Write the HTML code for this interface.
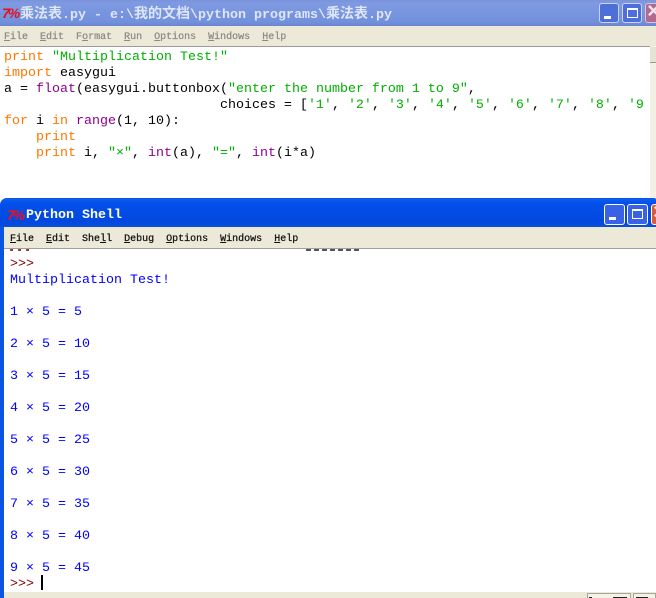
<!DOCTYPE html>
<html>
<head>
<meta charset="utf-8">
<style>
html,body{margin:0;padding:0;background:#fff}
#p{position:relative;width:656px;height:598px;overflow:hidden;background:#fff}
.a{position:absolute}
.m{font-family:"Liberation Mono","Noto Sans CJK SC",monospace;white-space:pre}
.c{font-size:13.33px;line-height:16px;left:4px}
.o{color:#ff7700}.g{color:#00b000}.k{color:#000}.f{color:#900090}
.s{font-size:13.33px;line-height:16px;left:10px;color:#0000ff}
.n{font-size:10px;line-height:14px;-webkit-text-stroke:.25px currentColor}
.n u{text-underline-offset:1px}
.b{box-sizing:border-box;border:1px solid #fff;border-radius:3px;overflow:hidden}
.l{font:italic bold 14px/16px "Liberation Sans",sans-serif;letter-spacing:-2px}
.t span{font-size:14px}
</style>
</head>
<body>
<div id="p">
<!-- Editor window -->
<div class="a" style="left:0;top:0;width:656px;height:26px;background:linear-gradient(#7b93d8,#7e9ae2 12%,#7290dc 85%,#6c86cf)"></div>
<div class="a m l" style="left:2px;top:5px;color:#e8101a">7%</div>
<div class="a m t" style="left:20px;top:7px;font-size:13.33px;line-height:16px;font-weight:bold;color:#dfe6f6"><span>乘法表</span>.py - e:\<span>我的文档</span>\python programs\<span>乘法表</span>.py</div>
<div class="a b" style="left:599px;top:3px;width:20px;height:20px;background:#4f6fd8;border-color:#c9d4f2"><div class="a" style="left:4px;top:12px;width:7px;height:3px;background:#fff"></div></div>
<div class="a b" style="left:622px;top:3px;width:20px;height:20px;background:#4f6fd8;border-color:#c9d4f2"><div class="a" style="left:4px;top:4px;width:11px;height:10px;box-sizing:border-box;border:1px solid #fff;border-top:2px solid #fff"></div></div>
<div class="a b" style="left:645px;top:3px;width:20px;height:20px;background:#b06a8e;border-color:#d8c4d8"><div class="a m" style="left:1px;top:-2px;font-size:22px;line-height:22px;font-weight:bold;color:#f0e6ee">×</div></div>
<div class="a" style="left:0;top:26px;width:656px;height:20px;background:#ece9d8"></div>
<div class="a m n" style="left:4px;top:31px;color:#8c8c84"><u>F</u>ile  <u>E</u>dit  F<u>o</u>rmat  <u>R</u>un  <u>O</u>ptions  <u>W</u>indows  <u>H</u>elp</div>
<div class="a" style="left:0;top:46px;width:650px;height:1px;background:#9a9a9a"></div>
<div class="a" style="left:650px;top:46px;width:6px;height:152px;background:#f3f1e6"></div>
<div class="a" style="left:650px;top:47px;width:6px;height:15px;background:#e6e3d4;border-bottom:1px solid #9a988c"></div>

<div class="a m c" style="top:50px"><span class="o">print</span> <span class="g">"Multiplication Test!"</span></div>
<div class="a m c" style="top:66px"><span class="o">import</span> <span class="k">easygui</span></div>
<div class="a m c" style="top:82px"><span class="k">a = </span><span class="f">float</span><span class="k">(easygui.buttonbox(</span><span class="g">"enter the number from 1 to 9"</span><span class="k">,</span></div>
<div class="a m c" style="top:98px"><span class="k">                           choices = [</span><span class="g">'1'</span><span class="k">, </span><span class="g">'2'</span><span class="k">, </span><span class="g">'3'</span><span class="k">, </span><span class="g">'4'</span><span class="k">, </span><span class="g">'5'</span><span class="k">, </span><span class="g">'6'</span><span class="k">, </span><span class="g">'7'</span><span class="k">, </span><span class="g">'8'</span><span class="k">, </span><span class="g">'9</span></div>
<div class="a m c" style="top:114px"><span class="o">for</span><span class="k"> i </span><span class="o">in</span> <span class="f">range</span><span class="k">(1, 10):</span></div>
<div class="a m c" style="top:130px"><span class="k">    </span><span class="o">print</span></div>
<div class="a m c" style="top:146px"><span class="k">    </span><span class="o">print</span><span class="k"> i, </span><span class="g">"×"</span><span class="k">, </span><span class="f">int</span><span class="k">(a), </span><span class="g">"="</span><span class="k">, </span><span class="f">int</span><span class="k">(i*a)</span></div>

<!-- Shell window -->
<div class="a" style="left:0;top:198px;width:660px;height:400px;background:#0a55e4;border-radius:7px 7px 0 0"></div>
<div class="a" style="left:0;top:199px;width:660px;height:28px;background:linear-gradient(#0b5fef,#0450e8 15%,#0148e0 80%,#0a50d8);border-radius:7px 7px 0 0"></div>
<div class="a m l" style="left:7px;top:207px;color:#f0101a">7%</div>
<div class="a m" style="left:26px;top:208px;font-size:13.33px;line-height:16px;font-weight:bold;color:#fff">Python Shell</div>
<div class="a b" style="left:604px;top:204px;width:21px;height:21px;background:#3a62e6"><div class="a" style="left:4px;top:12px;width:7px;height:3px;background:#fff"></div></div>
<div class="a b" style="left:627px;top:204px;width:21px;height:21px;background:#3a62e6"><div class="a" style="left:4px;top:4px;width:11px;height:10px;box-sizing:border-box;border:1px solid #fff;border-top:2px solid #fff"></div></div>
<div class="a b" style="left:651px;top:204px;width:21px;height:21px;background:#e0583a"><div class="a m" style="left:1px;top:-2px;font-size:22px;line-height:22px;font-weight:bold;color:#fff">×</div></div>
<div class="a" style="left:4px;top:227px;width:652px;height:21px;background:#ece9d8"></div>
<div class="a m n" style="left:10px;top:233px;color:#111"><u>F</u>ile  <u>E</u>dit  She<u>l</u>l  <u>D</u>ebug  <u>O</u>ptions  <u>W</u>indows  <u>H</u>elp</div>
<div class="a" style="left:4px;top:248px;width:652px;height:1px;background:#a0a0a0"></div>
<div class="a" style="left:4px;top:249px;width:652px;height:343px;background:#fff;overflow:hidden">
  <div class="a" style="left:6px;top:0;width:20px;height:2px;background:repeating-linear-gradient(90deg,#9c4040 0 3px,#fff 3px 8px)"></div>
  <div class="a" style="left:302px;top:0;width:54px;height:2px;background:repeating-linear-gradient(90deg,#555 0 5px,#fff 5px 8px)"></div>
</div>
<div class="a m s" style="top:257px;color:#770000">&gt;&gt;&gt;</div>
<div class="a m s" style="top:273px">Multiplication Test!</div>
<div class="a m s" style="top:305px">1 × 5 = 5</div>
<div class="a m s" style="top:337px">2 × 5 = 10</div>
<div class="a m s" style="top:369px">3 × 5 = 15</div>
<div class="a m s" style="top:401px">4 × 5 = 20</div>
<div class="a m s" style="top:433px">5 × 5 = 25</div>
<div class="a m s" style="top:465px">6 × 5 = 30</div>
<div class="a m s" style="top:497px">7 × 5 = 35</div>
<div class="a m s" style="top:529px">8 × 5 = 40</div>
<div class="a m s" style="top:561px">9 × 5 = 45</div>
<div class="a m s" style="top:577px;color:#770000">&gt;&gt;&gt;</div>
<div class="a" style="left:41px;top:575px;width:2px;height:15px;background:#000"></div>
<!-- status bar -->
<div class="a" style="left:4px;top:592px;width:652px;height:6px;background:#ece9d8"></div>
<div class="a" style="left:587px;top:593px;width:44px;height:5px;background:#f4f2e8;border:1px solid #a8a698;border-bottom:0;box-sizing:border-box"></div>
<div class="a" style="left:633px;top:593px;width:23px;height:5px;background:#f4f2e8;border:1px solid #a8a698;border-bottom:0;box-sizing:border-box"></div>
<div class="a" style="left:589px;top:597px;width:3px;height:1px;background:#222"></div>
<div class="a" style="left:613px;top:597px;width:14px;height:1px;background:#222"></div>
<div class="a" style="left:636px;top:597px;width:12px;height:1px;background:#222"></div>
</div>
</body>
</html>
